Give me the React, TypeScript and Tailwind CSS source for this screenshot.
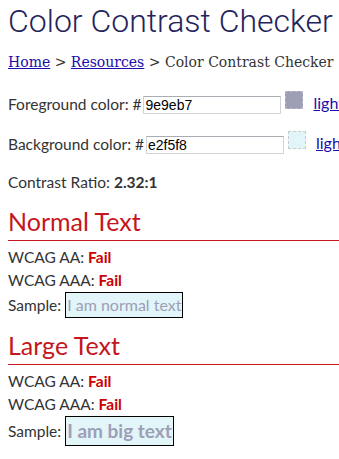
import React from 'react';

const body = { fontFamily: 'Lato, "Noto Sans", sans-serif' };

const ColorRow: React.FC<{ label: string; value: string; swatch: string; dashed: string; first?: boolean }> = ({
  label,
  value,
  swatch,
  dashed,
  first,
}) => (
  <div className={`flex items-start h-[40px] whitespace-nowrap ${first ? 'mt-[5px]' : ''}`}>
    <span className="text-[15.5px] text-[#333] leading-[18px] mt-[17px]">{label}</span>
    <input
      readOnly
      value={value}
      className="shrink-0 mt-[18px] ml-[2px] w-[138px] h-[18px] border border-[#cfd3da] border-t-[#a9acb3] bg-white px-[1px] text-[14px] text-black outline-none"
      style={{ fontFamily: '"Liberation Sans", Arial, sans-serif' }}
    />
    <span className={`shrink-0 mt-[13px] ml-[4px] w-[18px] h-[18px] border border-dashed ${dashed}`} style={{ background: swatch }} />
    <a href="#" className="ml-[10px] mt-[16px] text-[16px] leading-[18px] text-[#1a0dab] underline">
      lighten
    </a>
  </div>
);

const Section: React.FC<{ title: string; big?: boolean }> = ({ title, big }) => (
  <div>
    <h2 className="text-[25px] text-[#c4161c] leading-[30px] border-b border-[#c4161c] pb-[4px] mt-[12px]" style={body}>
      {title}
    </h2>
    <div className="text-[15.5px] text-[#333] leading-[23px] mt-[5px]" style={body}>
      <div>
        WCAG AA: <b className="text-[#c00]">Fail</b>
      </div>
      <div>
        WCAG AAA: <b className="text-[#c00]">Fail</b>
      </div>
      <div className="flex items-center">
        <span>Sample:&nbsp;</span>
        <span
          className={`border border-black bg-[#e2f5f8] text-[#9e9eb7] px-[1px] ${
            big ? 'text-[19px] font-bold leading-[28px]' : 'text-[16px] leading-[24px]'
          }`}
        >
          {big ? 'I am big text' : 'I am normal text'}
        </span>
      </div>
    </div>
  </div>
);

export default function App() {
  return (
    <div className="w-[339px] h-[459px] overflow-hidden bg-white pl-2">
      <h1
        className="text-[32px] leading-[38px] text-[#24245c] pt-[2px] whitespace-nowrap"
        style={{ fontFamily: 'Roboto, sans-serif', fontWeight: 300 }}
      >
        Color Contrast Checker
      </h1>
      <nav
        className="text-[14px] text-[#333] mt-[12px] whitespace-nowrap"
        style={{ fontFamily: '"DejaVu Serif", serif' }}
      >
        <a href="#" className="text-[#1a0dab] underline">Home</a> &gt;{' '}
        <a href="#" className="text-[#1a0dab] underline">Resources</a> &gt; Color Contrast Checker
      </nav>
      <div style={body}>
        <ColorRow first label="Foreground color: #" value="9e9eb7" swatch="#9e9eb7" dashed="border-[#b8b8c8]" />
        <ColorRow label="Background color: #" value="e2f5f8" swatch="#e2f5f8" dashed="border-[#c8cccf]" />
        <div className="text-[15.5px] text-[#333] mt-[13px]">
          Contrast Ratio: <b>2.32:1</b>
        </div>
      </div>
      <Section title="Normal Text" />
      <Section title="Large Text" big />
    </div>
  );
}
